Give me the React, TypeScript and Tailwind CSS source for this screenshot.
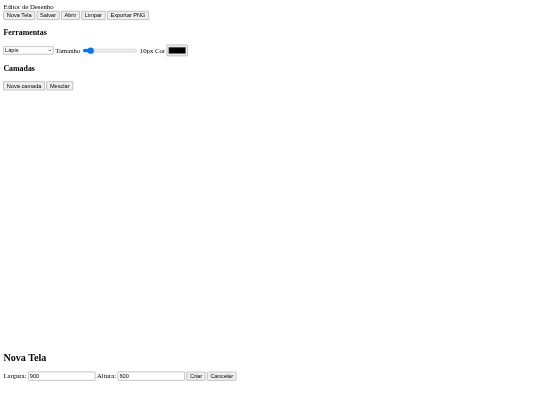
import { useState } from 'react'

const btn =
  'rounded-[2px] border border-[#767676] bg-[#efefef] px-[7px] py-[2px] text-[13.333px] leading-[normal] text-black'

const field =
  'h-[21px] w-[159px] rounded-[2px] border border-[#767676] bg-white px-[3px] font-["Liberation_Sans",Arial,sans-serif] text-[13.333px] text-black'

export default function App() {
  const [size, setSize] = useState(10)

  return (
    <div className="h-[405px] w-[540px] overflow-hidden">
      {/* the page is laid out at 1280x960 and shown at 540x405 */}
      <div className="w-[1280px] origin-top-left scale-[0.421875] p-[8px] font-['Liberation_Serif',serif] text-[16px] leading-[normal] text-black">
        <div>Editor de Desenho</div>
        <div className="flex gap-[4px] font-['Liberation_Sans',Arial,sans-serif]">
          <button className={btn}>Nova Tela</button>
          <button className={btn}>Salvar</button>
          <button className={btn}>Abrir</button>
          <button className={btn}>Limpar</button>
          <button className={btn}>Exportar PNG</button>
        </div>

        <h3 className="my-[18.72px] text-[18.72px] font-bold">Ferramentas</h3>
        <div className="flex items-center gap-[4px]">
          <span className="relative flex">
            <select className="h-[19px] w-[119px] appearance-none rounded-[2px] border border-[#767676] bg-white pl-[3px] font-['Liberation_Sans',Arial,sans-serif] text-[13.333px] text-black">
              <option>Lápis</option>
              <option>Borracha</option>
              <option>Retângulo</option>
              <option>Círculo</option>
            </select>
            <svg
              viewBox="0 0 8 5"
              className="pointer-events-none absolute right-[5px] top-[7px] h-[5px] w-[8px]"
              fill="none"
              stroke="#000"
              strokeWidth="1.4"
            >
              <path d="M0.6 0.6 4 4 7.4 0.6" />
            </svg>
          </span>
          <span>Tamanho</span>
          <input
            type="range"
            min={1}
            max={100}
            value={size}
            onChange={(e) => setSize(Number(e.target.value))}
            className="mx-[2px] w-[129px]"
          />
          <span>{size}px</span>
          <span>Cor</span>
          <input
            type="color"
            defaultValue="#000000"
            className="h-[27px] w-[50px] rounded-[2px] border border-[#767676] bg-[#efefef] px-[2px] py-[1px]"
          />
        </div>

        <h3 className="my-[18.72px] text-[18.72px] font-bold">Camadas</h3>
        <div className="flex gap-[4px] font-['Liberation_Sans',Arial,sans-serif]">
          <button className={btn}>Nova camada</button>
          <button className={btn}>Mesclar</button>
        </div>

        {/* drawing area */}
        <canvas width={900} height={600} className="block h-[600px] w-[900px]" />

        <h2 className="my-[19.92px] text-[24px] font-bold">Nova Tela</h2>
        <div className="flex items-center gap-[4px]">
          <span>Largura:</span>
          <input type="number" defaultValue={900} className={field} />
          <span>Altura:</span>
          <input type="number" defaultValue={600} className={field} />
          <span className="flex gap-[4px] font-['Liberation_Sans',Arial,sans-serif]">
            <button className={btn}>Criar</button>
            <button className={btn}>Cancelar</button>
          </span>
        </div>
      </div>
    </div>
  )
}
